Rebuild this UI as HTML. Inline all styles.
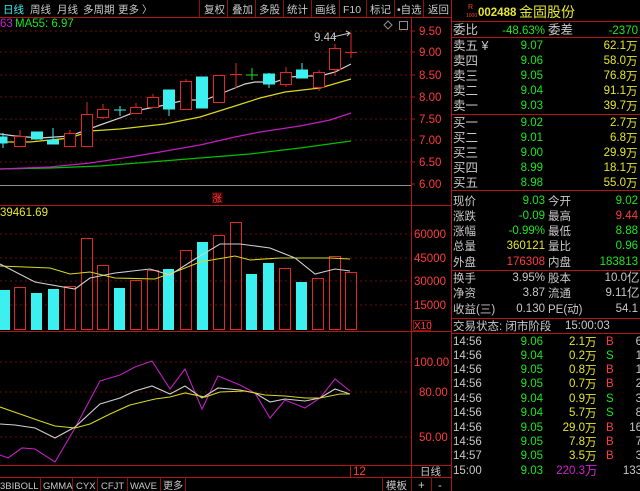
<!DOCTYPE html>
<html><head><meta charset="utf-8"><style>
html,body{margin:0;padding:0;background:#000;width:640px;height:491px;overflow:hidden}
svg{display:block}
text{font-family:"Liberation Sans","Noto Sans CJK SC",sans-serif;font-size:11.5px}
.cn{font-size:12.5px}
.tb{font-size:10.5px}
.g{fill:#c8c8c8}.gr{fill:#1ee61e}.y{fill:#e6e632}.r{fill:#ff3c3c}.c{fill:#3cf0f0}.m{fill:#d020d0}
</style></head><body>
<svg width="640" height="491" viewBox="0 0 640 491" xmlns="http://www.w3.org/2000/svg">
<rect width="640" height="491" fill="#000"/>
<!-- toolbar -->
<g>
<text x="3" y="13" class="c tb" style="font-size:10.5px">日线</text>
<text x="30" y="13" class="g" style="font-size:10.5px">周线</text>
<text x="57" y="13" class="g" style="font-size:10.5px">月线</text>
<text x="83" y="13" class="g" style="font-size:10.5px">多周期</text>
<text x="118" y="13" class="g" style="font-size:10.5px">更多 〉</text>
<text x="204" y="13" class="g" style="font-size:10.5px">复权</text>
<text x="232" y="13" class="g" style="font-size:10.5px">叠加</text>
<text x="259" y="13" class="g" style="font-size:10.5px">多股</text>
<text x="287" y="13" class="g" style="font-size:10.5px">统计</text>
<text x="315" y="13" class="g" style="font-size:10.5px">画线</text>
<text x="343" y="13" class="g" style="font-size:10.5px">F10</text>
<text x="370" y="13" class="g" style="font-size:10.5px">标记</text>
<text x="397" y="13" class="g" style="font-size:10.5px">•自选</text>
<text x="428" y="13" class="g" style="font-size:10.5px">返回</text>
</g>
<g stroke="#8c1010" stroke-width="1">
<line x1="199.5" y1="0" x2="199.5" y2="17"/><line x1="227.5" y1="0" x2="227.5" y2="17"/><line x1="255.5" y1="0" x2="255.5" y2="17"/><line x1="283.5" y1="0" x2="283.5" y2="17"/><line x1="311.5" y1="0" x2="311.5" y2="17"/><line x1="339.5" y1="0" x2="339.5" y2="17"/><line x1="366.5" y1="0" x2="366.5" y2="17"/><line x1="394.5" y1="0" x2="394.5" y2="17"/><line x1="423.5" y1="0" x2="423.5" y2="17"/>
</g>
<g stroke="#b01818" stroke-width="1" fill="none">
<line x1="0" y1="17.5" x2="451" y2="17.5"/>
<line x1="411.5" y1="17" x2="411.5" y2="477"/>
<line x1="451.5" y1="0" x2="451.5" y2="491"/>
<line x1="0" y1="205.5" x2="451" y2="205.5"/>
<line x1="0" y1="331.5" x2="451" y2="331.5"/>
<line x1="0" y1="465.5" x2="451" y2="465.5"/>
<line x1="0" y1="477.5" x2="451" y2="477.5"/>
<line x1="350.5" y1="465" x2="350.5" y2="477"/>
</g>
<line x1="0" y1="185.5" x2="411" y2="185.5" stroke="#909090"/>
<!-- grid -->
<g stroke="#6a0c0c" stroke-dasharray="2,3">
<line x1="0" y1="31" x2="411" y2="31"/><line x1="0" y1="52" x2="411" y2="52"/><line x1="0" y1="75" x2="411" y2="75"/><line x1="0" y1="97" x2="411" y2="97"/><line x1="0" y1="119" x2="411" y2="119"/><line x1="0" y1="140" x2="411" y2="140"/><line x1="0" y1="162" x2="411" y2="162"/>
<line x1="0" y1="234" x2="411" y2="234"/><line x1="0" y1="258" x2="411" y2="258"/><line x1="0" y1="281" x2="411" y2="281"/><line x1="0" y1="305" x2="411" y2="305"/>
<line x1="0" y1="362" x2="411" y2="362"/><line x1="0" y1="392" x2="411" y2="392"/><line x1="0" y1="437" x2="411" y2="437"/>
</g>
<g stroke="#b01818"><line x1="411" y1="31" x2="415" y2="31"/><line x1="411" y1="52" x2="415" y2="52"/><line x1="411" y1="75" x2="415" y2="75"/><line x1="411" y1="97" x2="415" y2="97"/><line x1="411" y1="119" x2="415" y2="119"/><line x1="411" y1="140" x2="415" y2="140"/><line x1="411" y1="162" x2="415" y2="162"/><line x1="411" y1="184" x2="415" y2="184"/></g>
<g class="r">
<text x="419" y="35">9.50</text><text x="419" y="56">9.00</text><text x="419" y="79">8.50</text><text x="419" y="101">8.00</text><text x="419" y="123">7.50</text><text x="419" y="144">7.00</text><text x="419" y="166">6.50</text><text x="419" y="188">6.00</text>
<text x="414" y="238">60000</text><text x="414" y="262">45000</text><text x="414" y="285">30000</text><text x="414" y="309">15000</text>
<text x="414" y="366">100.00</text><text x="419" y="396">80.00</text><text x="419" y="441">50.00</text>
<text x="353" y="475">12</text>
</g>
<rect x="413.5" y="320.5" width="17" height="10" fill="none" stroke="#8c1010"/>
<text x="414" y="329" class="r" style="font-size:10px">X10</text>
<text x="0" y="27" class="m">63</text><text x="15" y="27" class="gr">MA55: 6.97</text>
<text x="314" y="41" class="g">9.44</text>
<path d="M333 37 L350 33 M346 31 L350 33 L347 36" stroke="#c8c8c8" fill="none"/>
<path d="M388 21 L392 25 L388 29 L384 25Z" stroke="#909090" fill="none"/>
<rect x="399.5" y="21.5" width="8" height="8" fill="none" stroke="#909090"/>
<rect x="212" y="192" width="11" height="11" fill="#3a0000"/>
<text x="212" y="202" class="r" style="font-size:10px">涨</text>
<!-- MA lines -->
<g fill="none" stroke-width="1.2">
<polyline stroke="#00c000" points="0,169 50,168 100,166 150,162 200,158 250,154 300,148 351,141"/>
<polyline stroke="#c020c0" points="0,169 50,167 90,163 130,157 160,152 200,145 235,137 260,132 300,126 330,120 351,113"/>
<polyline stroke="#d8d820" points="0,142 30,142 70,138 90,131 120,129 165,124 200,117 235,106 260,98 285,92 320,88 351,79"/>
<polyline stroke="#d0d0d0" points="0,134 15,136 40,138 70,136 100,125 120,118 140,110 165,105 185,100 205,100 225,92 245,84 255,82 275,82 290,77 305,76 320,76 335,72 351,64"/>
</g>
<!-- candles -->
<g stroke="#e02828" fill="#000">
<line x1="20" y1="130" x2="20" y2="146"/><rect x="14.5" y="136.5" width="11" height="10"/>
<line x1="70" y1="130" x2="70" y2="146"/><rect x="64.5" y="133.5" width="11" height="13"/>
<line x1="87" y1="102" x2="87" y2="146"/><rect x="81.5" y="114.5" width="11" height="32"/>
<line x1="103" y1="104" x2="103" y2="119"/><rect x="97.5" y="109.5" width="11" height="8"/>
<line x1="136" y1="103" x2="136" y2="113"/><rect x="130.5" y="107.5" width="11" height="6"/>
<line x1="153" y1="94" x2="153" y2="107"/><rect x="147.5" y="97.5" width="11" height="10"/>
<line x1="186" y1="79" x2="186" y2="109"/><rect x="180.5" y="81.5" width="11" height="28"/>
<line x1="219" y1="75" x2="219" y2="102"/><rect x="213.5" y="75.5" width="11" height="27"/>
<line x1="236" y1="63" x2="236" y2="88"/><line x1="230" y1="74.5" x2="242" y2="74.5"/>
<line x1="286" y1="67" x2="286" y2="87"/><rect x="280.5" y="72.5" width="11" height="12"/>
<line x1="319" y1="70" x2="319" y2="91"/><rect x="313.5" y="72.5" width="11" height="15"/>
<line x1="335" y1="44" x2="335" y2="76"/><rect x="329.5" y="48.5" width="11" height="21"/>
<line x1="351" y1="33" x2="351" y2="58"/><line x1="345" y1="52.5" x2="357" y2="52.5"/>
</g>
<g stroke="#3cf0f0" fill="#3cf0f0">
<line x1="3" y1="133" x2="3" y2="148"/><rect x="0" y="137" width="7" height="6"/>
<rect x="31.5" y="132" width="11" height="7"/>
<line x1="53" y1="128" x2="53" y2="144"/><rect x="47.5" y="140" width="11" height="4"/>
<line x1="120" y1="106" x2="120" y2="116"/><line x1="114" y1="110" x2="126" y2="110"/>
<line x1="169" y1="90" x2="169" y2="116"/><rect x="163.5" y="90" width="11" height="19"/>
<rect x="196.5" y="77" width="11" height="31"/>
<line x1="269" y1="73" x2="269" y2="88"/><rect x="263.5" y="74" width="11" height="10"/>
<line x1="302" y1="63" x2="302" y2="78"/><rect x="296.5" y="70" width="11" height="8"/>
</g>
<g stroke="#20e020"><line x1="252" y1="68" x2="252" y2="80"/><line x1="246" y1="75" x2="258" y2="75"/></g>
<!-- volume -->
<text x="0" y="216" class="y">39461.69</text>
<g fill="#3cf0f0">
<rect x="0" y="290" width="10" height="40"/><rect x="31" y="293" width="11" height="37"/><rect x="48" y="289" width="11" height="41"/><rect x="114" y="288" width="11" height="42"/><rect x="163" y="269" width="11" height="61"/><rect x="197" y="242" width="11" height="88"/><rect x="246" y="274" width="11" height="56"/><rect x="263" y="263" width="11" height="67"/><rect x="296" y="282" width="11" height="48"/>
</g>
<g fill="none" stroke="#e02828">
<rect x="14.5" y="287.5" width="11" height="42"/><rect x="64.5" y="286.5" width="11" height="43"/><rect x="81.5" y="238.5" width="11" height="91"/><rect x="97.5" y="265.5" width="11" height="64"/><rect x="130.5" y="280.5" width="11" height="49"/><rect x="147.5" y="270.5" width="11" height="59"/><rect x="180.5" y="250.5" width="11" height="79"/><rect x="213.5" y="235.5" width="11" height="94"/><rect x="230.5" y="222.5" width="11" height="107"/><rect x="279.5" y="268.5" width="11" height="61"/><rect x="312.5" y="278.5" width="11" height="51"/><rect x="329.5" y="256.5" width="11" height="73"/><rect x="345.5" y="272.5" width="11" height="57"/>
</g>
<g fill="none" stroke-width="1.1">
<polyline stroke="#d8d820" points="0,266 50,268 70,274 90,272 115,278 155,279 180,270 200,262 235,256 250,260 280,258 300,258 330,258 350,259"/>
<polyline stroke="#d0d0d0" points="0,264 35,282 75,289 90,278 115,273 150,269 170,275 195,259 220,244 240,244 270,248 295,258 315,274 335,269 350,271"/>
<polyline stroke="#c020c0" points="0,455 8,458 22,448 35,449 55,462 75,428 100,381 120,375 135,367 152,361 170,389 185,369 202,409 218,376 240,385 255,393 270,418 285,400 305,408 320,398 335,379 350,391"/>
<polyline stroke="#d0d0d0" points="0,424 15,425 35,428 55,438 75,427 100,404 120,398 135,391 152,386 170,394 185,386 202,398 218,388 240,390 255,393 270,402 285,399 305,401 320,398 335,389 350,394"/>
<polyline stroke="#d8d820" points="0,407 20,414 40,421 55,426 75,428 90,424 110,414 130,405 155,399 170,397 185,393 205,397 220,392 245,391 265,395 285,396 305,398 320,398 340,394 350,394"/>
</g>
<text x="420" y="475" class="g" style="font-size:10.5px">日线</text>
<!-- bottom tabs -->
<g stroke="#8c1010"><line x1="40.5" y1="477" x2="40.5" y2="491"/><line x1="72.5" y1="477" x2="72.5" y2="491"/><line x1="97.5" y1="477" x2="97.5" y2="491"/><line x1="127.5" y1="477" x2="127.5" y2="491"/><line x1="160.5" y1="477" x2="160.5" y2="491"/><line x1="185.5" y1="477" x2="185.5" y2="491"/><line x1="382.5" y1="477" x2="382.5" y2="491"/><line x1="411.5" y1="477" x2="411.5" y2="491"/><line x1="431.5" y1="477" x2="431.5" y2="491"/></g>
<g class="g">
<text x="0" y="489" style="font-size:9.5px">3BIBOLL</text><text x="43" y="489" style="font-size:9.5px">GMMA</text><text x="76" y="489" style="font-size:9.5px">CYX</text><text x="101" y="489" style="font-size:9.5px">CFJT</text><text x="130" y="489" style="font-size:9.5px">WAVE</text><text x="163" y="489" style="font-size:10px">更多</text>
<text x="386" y="489" style="font-size:10.5px">模板</text><text x="418" y="489">+</text><text x="438" y="489">-</text>
</g>
<!-- right panel -->
<g stroke="#b01818"><line x1="452" y1="21.5" x2="640" y2="21.5"/><line x1="452" y1="37.5" x2="640" y2="37.5"/><line x1="452" y1="114.5" x2="640" y2="114.5"/><line x1="452" y1="190.5" x2="640" y2="190.5"/><line x1="452" y1="270.5" x2="640" y2="270.5"/><line x1="452" y1="318.5" x2="640" y2="318.5"/><line x1="452" y1="333.5" x2="640" y2="333.5"/></g>
<text x="468" y="9" class="r" style="font-size:7px">R</text><text x="466" y="17" class="r" style="font-size:5px">1000</text>
<text x="478" y="16" class="y" style="font-weight:bold">002488</text><text x="519" y="17" class="y" style="font-size:14px">金固股份</text>
<g>
<text x="453" y="34" class="g cn">委比</text><text x="545" y="34" text-anchor="end" class="gr">-48.63%</text><text x="548" y="34" class="g cn">委差</text><text x="638" y="34" text-anchor="end" class="gr">-2370</text>
<text x="453" y="50" class="g cn">卖五 ¥</text><text x="453" y="65" class="g cn">卖四</text><text x="453" y="80" class="g cn">卖三</text><text x="453" y="95" class="g cn">卖二</text><text x="453" y="110" class="g cn">卖一</text>
<text x="453" y="127" class="g cn">买一</text><text x="453" y="142" class="g cn">买二</text><text x="453" y="157" class="g cn">买三</text><text x="453" y="172" class="g cn">买四</text><text x="453" y="187" class="g cn">买五</text>
</g>
<g class="gr" text-anchor="end">
<text x="543" y="49">9.07</text><text x="543" y="64">9.06</text><text x="543" y="79">9.05</text><text x="543" y="94">9.04</text><text x="543" y="109">9.03</text>
<text x="543" y="126">9.02</text><text x="543" y="141">9.01</text><text x="543" y="156">9.00</text><text x="543" y="171">8.99</text><text x="543" y="186">8.98</text>
</g>
<g class="y" text-anchor="end">
<text x="626" y="49">62.1</text><text x="626" y="64">58.0</text><text x="626" y="79">76.8</text><text x="626" y="94">91.1</text><text x="626" y="109">39.7</text>
<text x="626" y="126">2.7</text><text x="626" y="141">6.8</text><text x="626" y="156">29.9</text><text x="626" y="171">18.1</text><text x="626" y="186">55.0</text>
</g>
<g class="y cn"><text x="626" y="50">万</text><text x="626" y="65">万</text><text x="626" y="80">万</text><text x="626" y="95">万</text><text x="626" y="110">万</text><text x="626" y="127">万</text><text x="626" y="142">万</text><text x="626" y="157">万</text><text x="626" y="172">万</text><text x="626" y="187">万</text></g>
<g class="g cn">
<text x="453" y="205">现价</text><text x="548" y="205">今开</text>
<text x="453" y="220">涨跌</text><text x="548" y="220">最高</text>
<text x="453" y="235">涨幅</text><text x="548" y="235">最低</text>
<text x="453" y="250">总量</text><text x="548" y="250">量比</text>
<text x="453" y="266">外盘</text><text x="548" y="266">内盘</text>
<text x="453" y="282">换手</text><text x="548" y="282">股本</text>
<text x="453" y="297">净资</text><text x="548" y="297">流通</text>
<text x="453" y="313">收益(三)</text><text x="548" y="313" style="font-size:11.5px">PE(动)</text>
<text x="453" y="330">交易状态: 闭市阶段</text>
</g>
<g text-anchor="end">
<text x="545" y="204" class="gr">9.03</text><text x="638" y="204" class="gr">9.02</text>
<text x="545" y="219" class="gr">-0.09</text><text x="638" y="219" class="r">9.44</text>
<text x="545" y="234" class="gr">-0.99%</text><text x="638" y="234" class="gr">8.88</text>
<text x="545" y="249" class="y">360121</text><text x="638" y="249" class="gr">0.96</text>
<text x="545" y="265" class="r">176308</text><text x="638" y="265" class="gr">183813</text>
<text x="545" y="281" class="g">3.95%</text><text x="627" y="281" class="g">10.0</text>
<text x="545" y="296" class="g">3.87</text><text x="627" y="296" class="g">9.11</text>
<text x="545" y="312" class="g">0.130</text><text x="638" y="312" class="g">54.1</text>
</g>
<text x="627" y="282" class="g cn">亿</text><text x="627" y="297" class="g cn">亿</text>
<text x="565" y="329" class="g">15:00:03</text>
<!-- ticks -->
<g class="g"><text x="453" y="345">14:56</text><text x="453" y="359">14:56</text><text x="453" y="373">14:56</text><text x="453" y="387">14:56</text><text x="453" y="402">14:56</text><text x="453" y="416">14:56</text><text x="453" y="431">14:56</text><text x="453" y="445">14:56</text><text x="453" y="459">14:57</text><text x="453" y="474">15:00</text></g>
<g class="gr" text-anchor="end"><text x="543" y="345">9.06</text><text x="543" y="359">9.04</text><text x="543" y="373">9.05</text><text x="543" y="387">9.05</text><text x="543" y="402">9.04</text><text x="543" y="416">9.04</text><text x="543" y="431">9.05</text><text x="543" y="445">9.05</text><text x="543" y="459">9.05</text><text x="543" y="474">9.03</text></g>
<g class="y" text-anchor="end"><text x="585" y="345">2.1</text><text x="585" y="359">0.2</text><text x="585" y="373">0.8</text><text x="585" y="387">0.7</text><text x="585" y="402">0.9</text><text x="585" y="416">5.7</text><text x="585" y="431">29.0</text><text x="585" y="445">7.8</text><text x="585" y="459">3.5</text></g>
<g class="y cn"><text x="585" y="346">万</text><text x="585" y="360">万</text><text x="585" y="374">万</text><text x="585" y="388">万</text><text x="585" y="403">万</text><text x="585" y="417">万</text><text x="585" y="432">万</text><text x="585" y="446">万</text><text x="585" y="460">万</text></g>
<text x="585" y="474" text-anchor="end" class="m">220.3</text><text x="585" y="475" class="m cn">万</text>
<g><text x="606" y="345" class="r">B</text><text x="606" y="359" class="gr">S</text><text x="606" y="373" class="r">B</text><text x="606" y="387" class="r">B</text><text x="606" y="402" class="gr">S</text><text x="606" y="416" class="gr">S</text><text x="606" y="431" class="r">B</text><text x="606" y="445" class="r">B</text><text x="606" y="459" class="r">B</text></g>
<g class="g" text-anchor="end"><text x="642" y="345">6</text><text x="642" y="359">1</text><text x="642" y="373">1</text><text x="642" y="387">2</text><text x="642" y="402">3</text><text x="642" y="416">8</text><text x="642" y="431">16</text><text x="642" y="445">7</text><text x="642" y="459">3</text><text x="642" y="474">133</text></g>
</svg>
</body></html>
